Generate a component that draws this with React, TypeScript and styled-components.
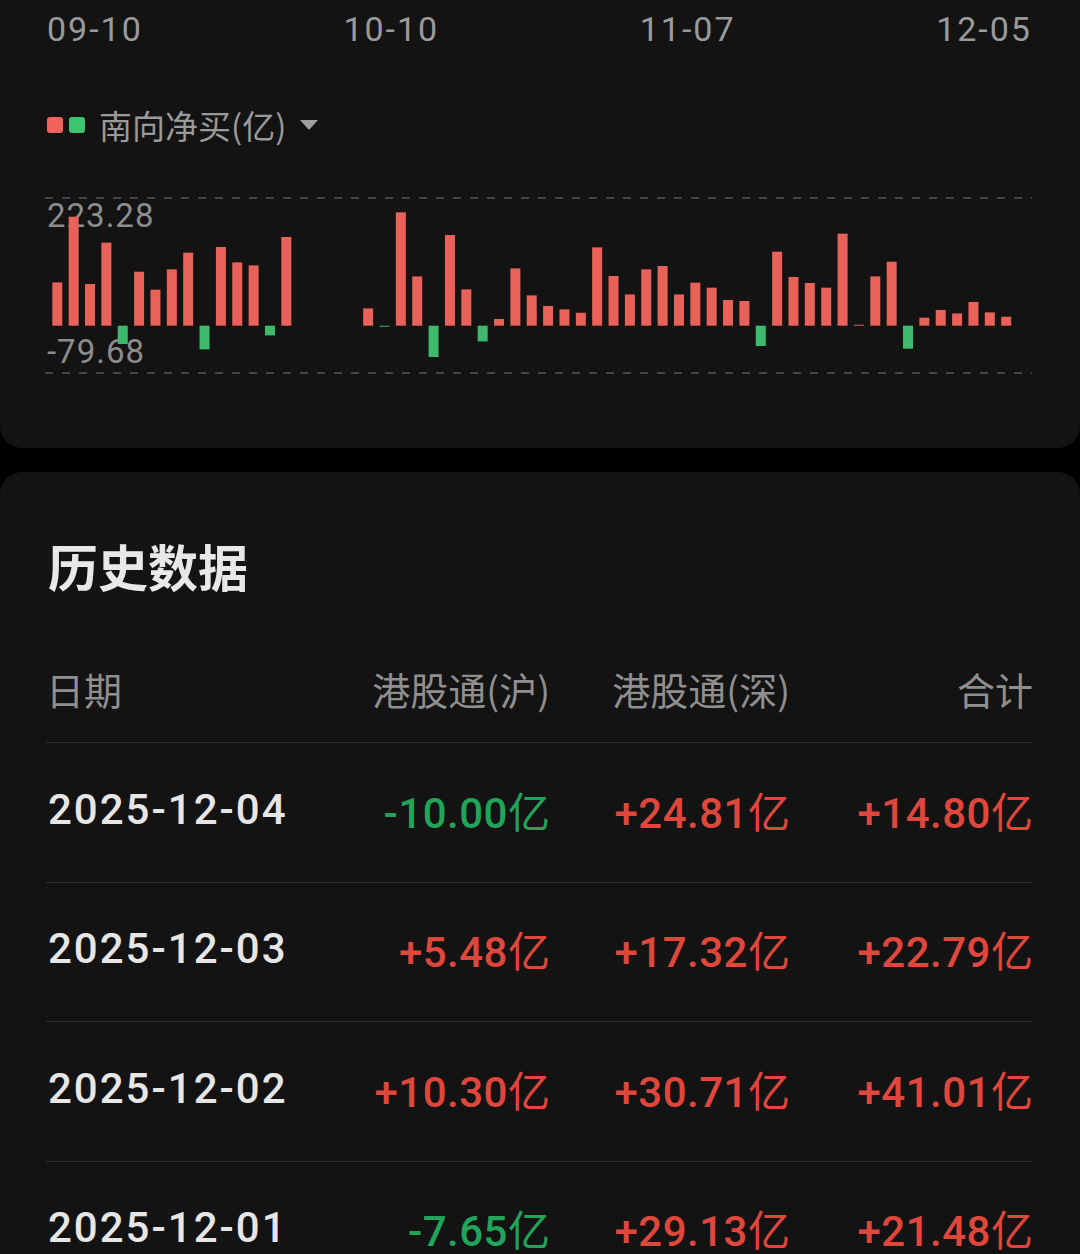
import React from "react";
import styled, { createGlobalStyle } from "styled-components";

const GlobalStyle = createGlobalStyle`
  html, body {
    margin: 0;
    padding: 0;
    background: #000;
    overflow: hidden;
  }
  body {
    font-family: Roboto, "Noto Sans CJK SC", sans-serif;
    -webkit-font-smoothing: antialiased;
  }
`;

const RED = "#e8625a";
const GREEN = "#3dba6e";
const PX_PER_YI = 127.7 / 223.28;

// 南向净买 per trading day, null = market closed
const flows: (number | null)[] = [
  75.7, 190.6, 72.9, 145.2, -32.0, 94.4, 63.0, 98.5, 127.7, -41.4,
  137.6, 110.7, 105.5, -17.0, 155.1, null, null, null, null, 30.3,
  -1.7, 198.2, 86.2, -54.7, 158.6, 63.5, -27.5, 11.7, 100.2, 53.0,
  34.5, 28.5, 22.7, 137.0, 86.9, 54.7, 98.5, 104.4, 54.7, 75.2,
  66.5, 45.0, 43.2, -35.5, 129.4, 85.2, 74.7, 66.5, 160.9, 0.6,
  86.2, 111.9, -40.2, 14.0, 27.5, 21.5, 41.5, 23.3, 15.7, null,
];

type Row = { date: string; sh: string; sz: string; total: string };

const history: Row[] = [
  { date: "2025-12-04", sh: "-10.00", sz: "+24.81", total: "+14.80" },
  { date: "2025-12-03", sh: "+5.48", sz: "+17.32", total: "+22.79" },
  { date: "2025-12-02", sh: "+10.30", sz: "+30.71", total: "+41.01" },
  { date: "2025-12-01", sh: "-7.65", sz: "+29.13", total: "+21.48" },
];

const Page = styled.div`
  background: #000;
  min-height: 1254px;
`;

const ChartCard = styled.section`
  background: #131313;
  border-radius: 0 0 22px 22px;
  padding: 0 48px 68px 45px;
`;

const AxisRow = styled.div`
  height: 58px;
  display: flex;
  align-items: center;
  justify-content: space-between;
  padding-left: 2px;
  font-size: 34px;
  color: #9a9a9a;
  letter-spacing: 2px;
`;

const Legend = styled.div`
  margin-top: 47px;
  height: 40px;
  display: flex;
  align-items: center;
  padding-left: 2px;
`;

const Swatch = styled.span<{ $color: string }>`
  width: 16px;
  height: 16px;
  border-radius: 3px;
  background: ${(p) => p.$color};
  margin-right: 6px;
`;

const LegendText = styled.span`
  margin-left: 8px;
  font-family: "Noto Sans CJK SC", sans-serif;
  font-size: 33px;
  color: #9a9a9a;
`;

const Caret = styled.span`
  margin-left: 14px;
  width: 0;
  height: 0;
  border-left: 9px solid transparent;
  border-right: 9px solid transparent;
  border-top: 10px solid #a0a0a0;
`;

const ChartSvg = styled.svg`
  display: block;
  margin-top: 45px;
  width: 987px;
  height: 190px;

  text {
    font-family: Roboto, sans-serif;
    font-size: 33px;
    fill: #8c8c8c;
    letter-spacing: 1px;
  }
`;

const TableCard = styled.section`
  margin-top: 24px;
  background: #131313;
  border-radius: 22px 22px 0 0;
  padding: 63px 47px 0 46px;
`;

const Title = styled.h2`
  margin: 0;
  height: 60px;
  line-height: 60px;
  padding-left: 2px;
  font-family: "Noto Sans CJK SC", sans-serif;
  font-size: 50px;
  font-weight: 700;
  color: #e8e8e8;
`;

const Grid = styled.div`
  display: grid;
  grid-template-columns: 258px 246px 240px 243px;
  align-items: center;
  box-sizing: border-box;
  border-bottom: 1px solid #2e2e2e;
`;

const HeaderRow = styled(Grid)`
  margin-top: 40px;
  height: 108px;
  font-family: "Noto Sans CJK SC", sans-serif;
  font-size: 38px;
  color: #8f8f8f;
`;

const DataRow = styled(Grid)`
  height: 139.5px;
  padding-bottom: 6px;
  font-size: 42px;
  font-weight: 500;
`;

const Cell = styled.div<{ $align?: "left" | "right" }>`
  text-align: ${(p) => p.$align ?? "right"};
  white-space: nowrap;
`;

const DateCell = styled(Cell)`
  color: #e6e6e6;
  letter-spacing: 2px;
  padding-left: 2px;
`;

const Amount = styled(Cell)<{ $up: boolean }>`
  color: ${(p) => (p.$up ? "#e0473c" : "#22a35a")};
  letter-spacing: 0.5px;
`;

const Unit = styled.span`
  font-family: "Noto Sans CJK SC", sans-serif;
  font-weight: 400;
  letter-spacing: 0;
`;

const FlowChart: React.FC = () => {
  const zero = 135.7;
  return (
    <ChartSvg viewBox="0 0 987 190">
      <line x1="0" x2="987" y1="8" y2="8" stroke="#454545" strokeWidth="2" strokeDasharray="8 9" />
      <line x1="0" x2="987" y1="183" y2="183" stroke="#454545" strokeWidth="2" strokeDasharray="8 9" />
      <text x="2" y="37">223.28</text>
      <text x="2" y="173">-79.68</text>
      {flows.map((v, i) => {
        if (v === null) return null;
        const h = Math.max(Math.abs(v) * PX_PER_YI, 1);
        const x = 12.3 + i * 16.36 - 5;
        return (
          <rect
            key={i}
            x={x}
            width="10"
            y={v >= 0 ? zero - h : zero}
            height={h}
            fill={v >= 0 ? RED : GREEN}
          />
        );
      })}
    </ChartSvg>
  );
};

const Money: React.FC<{ value: string }> = ({ value }) => (
  <Amount $up={!value.startsWith("-")}>
    {value}
    <Unit>亿</Unit>
  </Amount>
);

export default function App() {
  return (
    <Page>
      <GlobalStyle />
      <ChartCard>
        <AxisRow>
          <span>09-10</span>
          <span>10-10</span>
          <span>11-07</span>
          <span>12-05</span>
        </AxisRow>
        <Legend>
          <Swatch $color="#f0625a" />
          <Swatch $color="#3ec46f" />
          <LegendText>南向净买(亿)</LegendText>
          <Caret />
        </Legend>
        <FlowChart />
      </ChartCard>

      <TableCard>
        <Title>历史数据</Title>
        <HeaderRow>
          <Cell $align="left">日期</Cell>
          <Cell>港股通(沪)</Cell>
          <Cell>港股通(深)</Cell>
          <Cell>合计</Cell>
        </HeaderRow>
        {history.map((r) => (
          <DataRow key={r.date}>
            <DateCell $align="left">{r.date}</DateCell>
            <Money value={r.sh} />
            <Money value={r.sz} />
            <Money value={r.total} />
          </DataRow>
        ))}
      </TableCard>
    </Page>
  );
}
